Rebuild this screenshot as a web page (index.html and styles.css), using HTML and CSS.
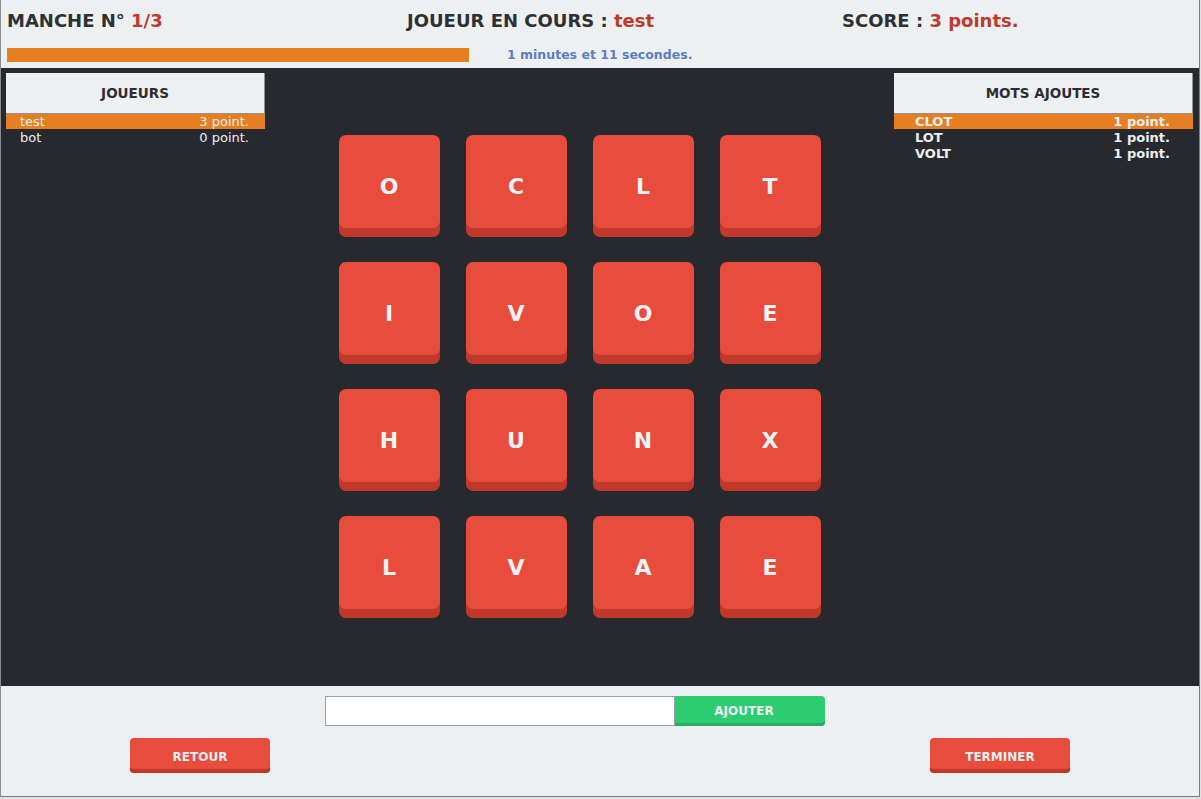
FILE: index.html
```html
<!DOCTYPE html>
<html lang="fr">
<head>
<meta charset="utf-8">
<title>Boggle</title>
<link rel="stylesheet" href="styles.css">
</head>
<body>
<div class="window">
  <header class="top">
    <div class="top-row">
      <div class="stat stat-1">MANCHE N° <span class="hl">1/3</span></div>
      <div class="stat stat-2">JOUEUR EN COURS : <span class="hl">test</span></div>
      <div class="stat stat-3">SCORE : <span class="hl">3 points.</span></div>
    </div>
    <div class="timer-row">
      <div class="progress"></div>
      <div class="timer">1 minutes et 11 secondes.</div>
    </div>
  </header>

  <main class="board">
    <section class="panel panel-left">
      <div class="panel-head">JOUEURS</div>
      <ul class="list">
        <li class="row active"><span>test</span><span>3 point.</span></li>
        <li class="row"><span>bot</span><span>0 point.</span></li>
      </ul>
    </section>

    <section class="center">
      <div class="grid">
        <div class="tile">O</div><div class="tile">C</div><div class="tile">L</div><div class="tile">T</div>
        <div class="tile">I</div><div class="tile">V</div><div class="tile">O</div><div class="tile">E</div>
        <div class="tile">H</div><div class="tile">U</div><div class="tile">N</div><div class="tile">X</div>
        <div class="tile">L</div><div class="tile">V</div><div class="tile">A</div><div class="tile">E</div>
      </div>
    </section>

    <section class="panel panel-right">
      <div class="panel-head">MOTS AJOUTES</div>
      <ul class="list words">
        <li class="row active"><span>CLOT</span><span>1 point.</span></li>
        <li class="row"><span>LOT</span><span>1 point.</span></li>
        <li class="row"><span>VOLT</span><span>1 point.</span></li>
      </ul>
    </section>
  </main>

  <footer class="bottom">
    <div class="add-row">
      <input class="word-input" type="text">
      <button class="btn-add">AJOUTER</button>
    </div>
    <div class="btn-row">
      <button class="btn btn-red">RETOUR</button>
      <button class="btn btn-red">TERMINER</button>
    </div>
  </footer>
</div>
</body>
</html>
```

FILE: styles.css
```css
* { box-sizing: border-box; }

html, body {
  margin: 0;
  padding: 0;
  background: #dfe2e3;
  font-family: "DejaVu Sans", Verdana, sans-serif;
}

.window {
  width: 1200px;
  height: 797px;
  border-left: 1px solid #8a8c8e;
  border-right: 1px solid #7a7c7e;
  border-bottom: 1px solid #7a7c7e;
  display: flex;
  flex-direction: column;
  background: #ecf0f1;
}

/* ---------- header ---------- */
.top {
  height: 68px;
  background: #ecf0f1;
  flex: none;
}

.top-row {
  display: grid;
  grid-template-columns: 400px 400px 1fr;
  padding-top: 9px;
  height: 32px;
}

.stat {
  font-size: 18px;
  font-weight: bold;
  line-height: 24px;
  color: #2f3033;
  white-space: nowrap;
}
.stat-1 { padding-left: 6px; }
.stat-2 { padding-left: 6px; }
.stat-3 { padding-left: 41px; }

.hl { color: #c0392b; }

.timer-row {
  display: flex;
  align-items: center;
  margin-top: 16px;
  height: 14px;
  padding-left: 6px;
}

.progress {
  width: 462px;
  height: 14px;
  background: #e67e22;
}

.timer {
  margin-left: 38px;
  font-size: 12.5px;
  font-weight: bold;
  line-height: 14px;
  color: #5b7ec6;
}

/* ---------- board ---------- */
.board {
  flex: none;
  height: 618px;
  background: #28292e;
  display: flex;
  padding: 5px 6px 0 5px;
}

.panel { flex: none; }
.panel-left { width: 259px; }
.panel-right { width: 299px; }

.panel-head {
  height: 41px;
  background: #ecf0f1;
  border-right: 1px solid #8f9395;
  border-bottom: 1px solid #8f9395;
  display: flex;
  align-items: center;
  justify-content: center;
  font-size: 13.5px;
  font-weight: bold;
  color: #2c2d31;
}

.list {
  list-style: none;
  margin: 0;
  padding: 0;
}

.row {
  display: flex;
  justify-content: space-between;
  height: 16px;
  line-height: 16px;
  font-size: 13px;
  color: #ecf0f1;
  padding: 0 16px 0 14px;
}
.row.active { background: #e67e22; height: 15px; line-height: 15px; margin-bottom: 1px; }

.words .row {
  font-weight: bold;
  padding: 0 23px 0 21px;
}

.center {
  flex: 1;
  display: flex;
  justify-content: center;
  padding-top: 62px;
}

.grid {
  display: grid;
  grid-template-columns: repeat(4, 101px);
  grid-auto-rows: 93px;
  column-gap: 26px;
  row-gap: 34px;
  align-content: start;
}

.tile {
  height: 93px;
  background: #e74c3c;
  border-radius: 7px;
  box-shadow: 0 9px 0 #c0392b;
  display: flex;
  align-items: center;
  justify-content: center;
  padding-top: 9px;
  font-size: 22px;
  font-weight: bold;
  color: #f2f3f4;
}

/* ---------- bottom ---------- */
.bottom {
  flex: 1;
  background: #ecf0f1;
  padding-top: 10px;
}

.add-row {
  display: flex;
  margin-left: 324px;
  height: 30px;
}

.word-input {
  width: 350px;
  height: 30px;
  border: 1px solid #95a5a6;
  background: #ffffff;
  margin: 0;
  padding: 0 6px;
  outline: none;
}

.btn-add {
  width: 150px;
  height: 30px;
  margin: 0;
  border: none;
  border-radius: 0 4px 4px 0;
  background: #2ecc71;
  box-shadow: inset 0 -3px 0 #27ae60;
  color: #ecf0f1;
  font-family: "DejaVu Sans", Verdana, sans-serif;
  font-size: 12px;
  font-weight: bold;
  padding: 0 12px 0 0;
}

.btn-row {
  display: flex;
  justify-content: space-between;
  padding: 0 129px;
  margin-top: 12px;
}

.btn {
  width: 140px;
  height: 35px;
  margin: 0;
  border: none;
  border-radius: 4px;
  font-family: "DejaVu Sans", Verdana, sans-serif;
  font-size: 12px;
  font-weight: bold;
  color: #ecf0f1;
  padding: 2px 0 0 0;
}

.btn-red {
  background: #e74c3c;
  box-shadow: inset 0 -4px 0 #c0392b;
}
```
